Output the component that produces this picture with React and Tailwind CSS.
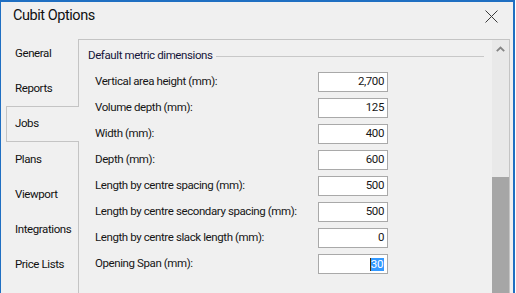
const tabs = ["General", "Reports", "Jobs", "Plans", "Viewport", "Integrations", "Price Lists"];

const fields = [
  { label: "Vertical area height (mm):", value: "2,700" },
  { label: "Volume depth (mm):", value: "125" },
  { label: "Width (mm):", value: "400" },
  { label: "Depth (mm):", value: "600" },
  { label: "Length by centre spacing (mm):", value: "500" },
  { label: "Length by centre secondary spacing (mm):", value: "500" },
  { label: "Length by centre slack length (mm):", value: "0" },
  { label: "Opening Span (mm):", value: "30", selected: true },
];

const font = { fontFamily: '"Segoe UI", Roboto, "Liberation Sans", sans-serif' };

export default function App() {
  return (
    <div className="w-[516px] h-[293px] overflow-hidden bg-white flex" style={font}>
      {/* window */}
      <div className="w-[513px] h-full flex flex-col bg-[#f0f0f0] border-t-2 border-l border-[#1f6fc2]">
        {/* title bar */}
        <div className="h-[28px] flex items-center justify-between pl-[12px] pr-[15px] shrink-0">
          <span className="text-[14.5px] tracking-[-0.45px] text-[#111] leading-none pt-px">Cubit Options</span>
          <svg width="13" height="13" viewBox="0 0 13 13" className="mt-px">
            <path d="M0.5 0.5 L12.5 12.5 M12.5 0.5 L0.5 12.5" stroke="#3a3a3a" strokeWidth="1" />
          </svg>
        </div>

        <div className="flex flex-1 min-h-0 text-[11.5px] tracking-[-0.4px]">
          {/* tab strip */}
          <div className="w-[77px] shrink-0 flex flex-col pt-[6px] relative z-10">
            {tabs.map((t) =>
              t === "Jobs" ? (
                <div
                  key={t}
                  className="h-[36px] ml-[5px] -mr-px bg-[#f0f0f0] border border-r-0 border-[#c4c4c4] flex items-center pl-[8px] text-[#111] whitespace-nowrap"
                >
                  {t}
                </div>
              ) : (
                <div key={t} className="h-[35px] flex items-center pl-[14px] text-[#111] whitespace-nowrap">
                  {t}
                </div>
              )
            )}
          </div>

          {/* tab page */}
          <div className="flex-1 flex flex-col pt-[9px] pr-[3px]">
            <div className="flex-1 flex border-l border-t border-r border-[#c4c4c4]">
              <div className="flex-1 flex flex-col">
                <div className="h-[16px] mt-[8px] flex items-center pl-[9px] pr-[8px]">
                  <span className="text-[#15153a] leading-none whitespace-nowrap">Default metric dimensions</span>
                  <div className="flex-1 h-px bg-[#c8c8c8] ml-[3px]" />
                </div>
                <div className="flex flex-col gap-[6px] mt-[8px]">
                  {fields.map((f) => (
                    <div key={f.label} className="h-[20px] flex items-center pl-[16px]">
                      <span className="w-[223px] text-[#161616] whitespace-nowrap">{f.label}</span>
                      <div className="w-[70px] h-[20px] bg-white border border-[#a9a9a9] flex items-center justify-end pr-[3px] text-[#161616]">
                        {f.selected ? (
                          <span className="relative bg-[#3399ff] text-white h-[13px] leading-[13px] px-px">
                            <span className="absolute left-0 top-0 w-px h-[13px] bg-[#4a2a00]" />
                            {f.value}
                          </span>
                        ) : (
                          f.value
                        )}
                      </div>
                    </div>
                  ))}
                </div>
              </div>
              {/* scrollbar */}
              <div className="w-[17px] shrink-0 flex flex-col bg-[#e9e9e9]">
                <div className="h-[17px] flex items-center justify-center">
                  <svg width="9" height="6" viewBox="0 0 9 6">
                    <path d="M0.8 5.2 L4.5 1.5 L8.2 5.2" stroke="#858585" strokeWidth="1.8" fill="none" />
                  </svg>
                </div>
                <div className="h-[120px]" />
                <div className="flex-1 bg-[#a6a6a6]" />
              </div>
            </div>
          </div>
        </div>
      </div>
      {/* window edge */}
      <div className="w-[3px] h-full flex">
        <div className="w-[2px] h-full bg-[#1f6fc2]" />
        <div className="w-px h-full bg-white" />
      </div>
    </div>
  );
}
